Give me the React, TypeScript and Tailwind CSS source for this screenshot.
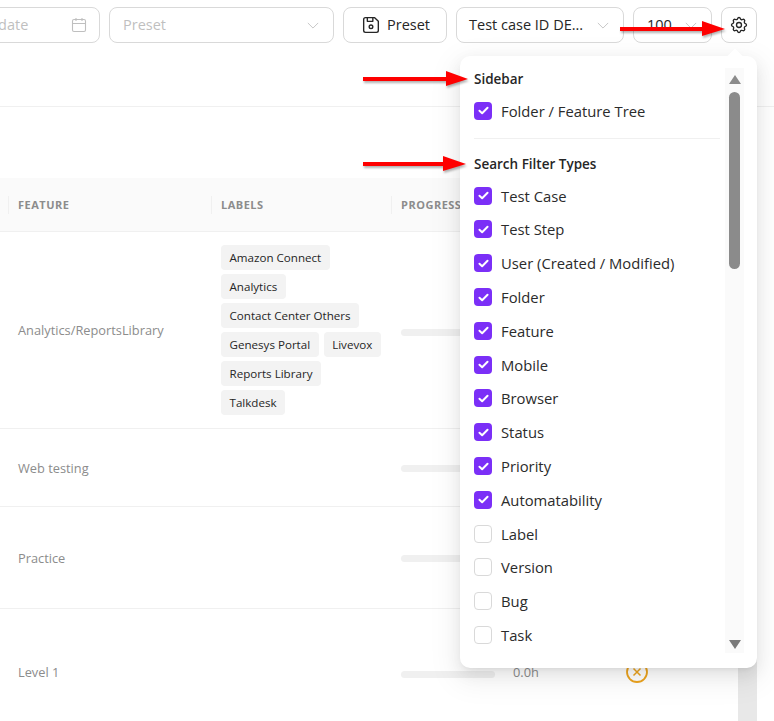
import { TbDeviceFloppy, TbSettings } from 'react-icons/tb';

const font = "font-['Open_Sans',sans-serif]";

const sidebarItems = ['Folder / Feature Tree'];

const filterItems = [
  { label: 'Test Case', checked: true },
  { label: 'Test Step', checked: true },
  { label: 'User (Created / Modified)', checked: true },
  { label: 'Folder', checked: true },
  { label: 'Feature', checked: true },
  { label: 'Mobile', checked: true },
  { label: 'Browser', checked: true },
  { label: 'Status', checked: true },
  { label: 'Priority', checked: true },
  { label: 'Automatability', checked: true },
  { label: 'Label', checked: false },
  { label: 'Version', checked: false },
  { label: 'Bug', checked: false },
  { label: 'Task', checked: false },
];

const labelLines = [
  ['Amazon Connect'],
  ['Analytics'],
  ['Contact Center Others'],
  ['Genesys Portal', 'Livevox'],
  ['Reports Library'],
  ['Talkdesk'],
];

const Chevron = ({ className }: { className: string }) => (
  <svg viewBox="0 0 14 8" fill="none" stroke="currentColor" strokeWidth="1" className={className}>
    <path d="M1 1l6 6 6-6" />
  </svg>
);

const CalendarIcon = () => (
  <svg viewBox="0 0 16 16" fill="none" stroke="currentColor" strokeWidth="1.1" className="h-4 w-4">
    <rect x="1.5" y="2.5" width="13" height="12" rx="1.5" />
    <path d="M1.5 6.5h13M5 1v3M11 1v3" />
  </svg>
);

const Checkbox = ({ checked }: { checked: boolean }) =>
  checked ? (
    <span className="flex h-[18px] w-[18px] shrink-0 items-center justify-center rounded-[4px] bg-[#7b2ff7]">
      <svg viewBox="0 0 12 10" fill="none" stroke="white" strokeWidth="2.2" strokeLinecap="round" strokeLinejoin="round" className="h-[9px] w-[11px]">
        <path d="M1.5 5.2l3 2.8 6-6" />
      </svg>
    </span>
  ) : (
    <span className="h-[18px] w-[18px] shrink-0 rounded-[4px] border border-[#d9d9d9] bg-white" />
  );

const CheckRow = ({ label, checked }: { label: string; checked: boolean }) => (
  <div className="flex h-[33.8px] items-center gap-[9px] text-[14.8px] text-[#2b2b2b]">
    <Checkbox checked={checked} />
    <span>{label}</span>
  </div>
);

const RedArrow = ({ className, tail, width }: { className: string; tail: number; width: number }) => (
  <svg
    viewBox={`0 0 ${width} 16`}
    width={width}
    height={16}
    className={`absolute z-20 drop-shadow-[1px_2px_1px_rgba(0,0,0,0.3)] ${className}`}
  >
    <polygon
      fill="#fe0000"
      points={`0,6 ${tail},6 ${tail},0 ${width},8 ${tail},15 ${tail},10 0,10`}
    />
  </svg>
);

const ProgressBar = () => <div className="h-[7px] w-[94px] rounded-full bg-[#f0f0f0]" />;

const Row = ({
  feature,
  height,
  textOffset,
  barOffset,
  children,
}: {
  feature: string;
  height: string;
  textOffset: string;
  barOffset: string;
  children?: React.ReactNode;
}) => (
  <div className={`flex items-center border-b border-[#f0f0f0] pl-[18px] ${height}`}>
    <div className={`w-[203px] shrink-0 text-[12.8px] text-[#8c8c8c] ${textOffset}`}>{feature}</div>
    <div className="w-[180px] shrink-0">{children}</div>
    <div className={`shrink-0 ${barOffset}`}>
      <ProgressBar />
    </div>
  </div>
);

export default function App() {
  return (
    <div className={`relative h-[721px] w-[774px] overflow-hidden bg-white ${font}`}>
      {/* Toolbar */}
      <div className="flex h-[107px] justify-end gap-[9px] border-b border-[#f0f0f0] pr-[17px] pt-[7px]">
        <div className="flex h-9 w-[150px] shrink-0 items-center justify-between rounded-lg border border-[#d9d9d9] pl-[11px] pr-[12px] text-[14.5px] text-[#bfbfbf]">
          <span>Start date</span>
          <CalendarIcon />
        </div>
        <div className="flex h-9 w-[225px] shrink-0 items-center justify-between rounded-lg border border-[#d9d9d9] pl-[13px] pr-[14px] text-[14.5px] text-[#bfbfbf]">
          <span>Preset</span>
          <Chevron className="h-[7px] w-[12px]" />
        </div>
        <div className="flex h-9 w-[104px] shrink-0 items-center justify-center gap-[5px] rounded-lg border border-[#d9d9d9] text-[14.5px] text-[#262626]">
          <TbDeviceFloppy className="h-[22px] w-[22px]" strokeWidth={1.5} />
          <span>Preset</span>
        </div>
        <div className="flex h-9 w-[168px] shrink-0 items-center justify-between rounded-lg border border-[#d9d9d9] pl-[12px] pr-[14px] text-[14.5px] text-[#262626]">
          <span>Test case ID DE...</span>
          <Chevron className="h-[7px] w-[12px] text-[#bfbfbf]" />
        </div>
        <div className="flex h-9 w-[79px] shrink-0 items-center justify-between rounded-lg border border-[#d9d9d9] pl-[13px] pr-[14px] text-[14.5px] text-[#262626]">
          <span>100</span>
          <Chevron className="h-[7px] w-[12px] text-[#bfbfbf]" />
        </div>
        <div className="flex h-9 w-9 shrink-0 items-center justify-center rounded-lg border border-[#d9d9d9] text-[#262626]">
          <TbSettings className="h-5 w-5" strokeWidth={1.6} />
        </div>
      </div>

      <div className="flex pr-[17px] pt-[71px]">
        {/* Table */}
        <div className="w-[738px] shrink-0">
          <div className="flex h-[54px] items-center border-b border-[#f0f0f0] bg-[#fafafa] pl-2 pt-[1px] text-[11px] font-bold tracking-[0.5px] text-[#8c8c8c]">
            <div className="w-[203px] shrink-0 border-l border-[#f0f0f0] pl-[9px] leading-[18px]">FEATURE</div>
            <div className="w-[180px] shrink-0 border-l border-[#f0f0f0] pl-[9px] leading-[18px]">LABELS</div>
            <div className="shrink-0 border-l border-[#f0f0f0] pl-[9px] leading-[18px]">PROGRESS</div>
          </div>
          <Row feature="Analytics/ReportsLibrary" height="h-[197px]" textOffset="pt-[1px]" barOffset="pt-[4px]">
            <div className="flex flex-col gap-1">
              {labelLines.map((line) => (
                <div key={line[0]} className="flex gap-[5px]">
                  {line.map((tag) => (
                    <span key={tag} className="flex h-[25px] items-center rounded-[4px] bg-[#f3f3f3] px-[8.5px] text-[11.6px] text-[#262626]">
                      {tag}
                    </span>
                  ))}
                </div>
              ))}
            </div>
          </Row>
          <Row feature="Web testing" height="h-[78px]" textOffset="pt-[3px]" barOffset="pt-[2px]" />
          <Row feature="Practice" height="h-[102px]" textOffset="pt-[3px]" barOffset="pt-[2px]" />
          <div className="flex h-[130px] items-center pb-[2px] pl-[18px]">
            <div className="w-[383px] shrink-0 text-[12.8px] text-[#8c8c8c]">Level 1</div>
            <div className="shrink-0 pt-[3px]">
              <ProgressBar />
            </div>
            <div className="ml-[18px] w-[113px] shrink-0 text-[12.8px] text-[#8c8c8c]">0.0h</div>
            <svg viewBox="0 0 22 22" fill="none" stroke="#eda41e" className="-mt-[3px] h-[22px] w-[22px] shrink-0">
              <circle cx="11" cy="11" r="10" strokeWidth="1.8" />
              <path d="M7.5 7.5l7 7M14.5 7.5l-7 7" strokeWidth="1.5" />
            </svg>
          </div>
        </div>
        {/* Page scrollbar track */}
        <div className="mt-[400px] w-[19px] shrink-0 bg-[#e8e8e8]" />
      </div>

      {/* Popover */}
      <div className="absolute left-[460px] top-[56px] z-10 h-[612px] w-[297px] rounded-[10px] bg-white pl-[14px] pt-[9px] shadow-[0_6px_16px_0_rgba(0,0,0,0.08),0_3px_6px_-4px_rgba(0,0,0,0.12),0_9px_28px_8px_rgba(0,0,0,0.05)]">
        <div className="absolute -top-[5px] right-[16px] h-3 w-3 rotate-45 bg-white" />
        <div className="mb-[1px] flex h-[28px] items-center text-[13.5px] font-semibold text-[#262626]">Sidebar</div>
        {sidebarItems.map((label) => (
          <CheckRow key={label} label={label} checked />
        ))}
        <div className="mb-[11px] mr-[37px] mt-[10px] border-t border-[#f0f0f0]" />
        <div className="mb-[1px] flex h-[28px] items-center text-[13.5px] font-semibold text-[#262626]">Search Filter Types</div>
        {filterItems.map((item) => (
          <CheckRow key={item.label} label={item.label} checked={item.checked} />
        ))}
        {/* Popover scrollbar */}
        <div className="absolute bottom-[15px] right-[13px] top-[12px] flex w-[19px] flex-col items-center bg-[#fafafa] pb-[4px] pt-[7px]">
          <div className="h-0 w-0 border-x-[6.5px] border-b-[9px] border-x-transparent border-b-[#8b8b8b]" />
          <div className="mt-[8px] h-[177px] w-[11px] rounded-full bg-[#8b8b8b]" />
          <div className="mt-auto h-0 w-0 border-x-[6.5px] border-t-[9px] border-x-transparent border-t-[#7a7a7a]" />
        </div>
      </div>

      {/* Annotation arrows */}
      <RedArrow className="left-[620px] top-[21px]" tail={82} width={105} />
      <RedArrow className="left-[363px] top-[71px]" tail={83} width={105} />
      <RedArrow className="left-[363px] top-[156px]" tail={80} width={103} />
    </div>
  );
}
